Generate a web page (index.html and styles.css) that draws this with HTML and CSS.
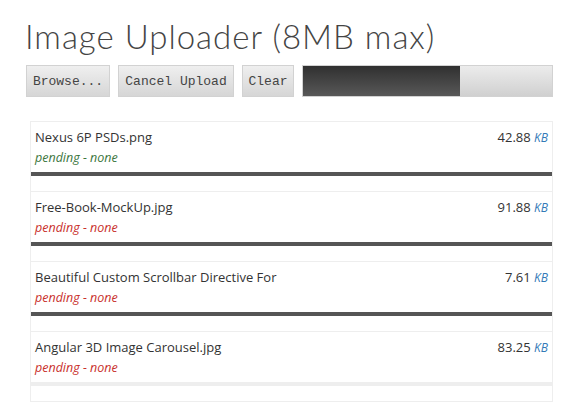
FILE: index.html
```html
<!DOCTYPE html>
<html lang="en">
<head>
    <meta charset="UTF-8">
    <meta name="viewport" content="width=device-width, initial-scale=1.0">
    <title>Image Uploader</title>
    <link rel="stylesheet" href="styles.css">
</head>
<body>
    <div class="container">
        <h1>Image Uploader (8MB max)</h1>

        <div class="toolbar">
            <button class="btn btn-browse">Browse...</button>
            <button class="btn btn-cancel">Cancel Upload</button>
            <button class="btn btn-clear">Clear</button>
            <div class="progress">
                <div class="progress-fill" style="width: 63%;"></div>
            </div>
        </div>

        <ul class="file-list">
            <li class="file">
                <div class="file-row">
                    <span class="file-name">Nexus 6P PSDs.png</span>
                    <span class="file-size">42.88 <em>KB</em></span>
                </div>
                <div class="file-status ok">pending - none</div>
                <div class="file-bar"><div class="file-bar-fill" style="width: 100%;"></div></div>
            </li>
            <li class="file">
                <div class="file-row">
                    <span class="file-name">Free-Book-MockUp.jpg</span>
                    <span class="file-size">91.88 <em>KB</em></span>
                </div>
                <div class="file-status err">pending - none</div>
                <div class="file-bar"><div class="file-bar-fill" style="width: 100%;"></div></div>
            </li>
            <li class="file">
                <div class="file-row">
                    <span class="file-name">Beautiful Custom Scrollbar Directive For</span>
                    <span class="file-size">7.61 <em>KB</em></span>
                </div>
                <div class="file-status err">pending - none</div>
                <div class="file-bar"><div class="file-bar-fill" style="width: 100%;"></div></div>
            </li>
            <li class="file">
                <div class="file-row">
                    <span class="file-name">Angular 3D Image Carousel.jpg</span>
                    <span class="file-size">83.25 <em>KB</em></span>
                </div>
                <div class="file-status err">pending - none</div>
                <div class="file-bar"><div class="file-bar-fill" style="width: 0%;"></div></div>
            </li>
        </ul>
    </div>
</body>
</html>
```

FILE: styles.css
```css
body {
    margin: 0;
    padding: 0;
    background-color: #fff;
    font-family: "Open Sans", Arial, sans-serif;
    color: #333;
}

.container {
    width: 527px;
    padding: 16px 0 0 26px;
}

h1 {
    margin: 0 0 0 -1px;
    font-family: Lato, "Open Sans", sans-serif;
    font-weight: 300;
    font-size: 33px;
    line-height: 40px;
    letter-spacing: 1px;
    color: #444;
}

.toolbar {
    display: flex;
    gap: 8px;
    margin-top: 9px;
    height: 32px;
}

.btn {
    height: 32px;
    padding: 0 5px;
    border: 1px solid #d2d2d2;
    border-radius: 0;
    background: linear-gradient(#efefef, #d6d6d6);
    font-family: "Liberation Mono", "Courier New", monospace;
    font-size: 13px;
    color: #444;
    cursor: pointer;
}

.btn-browse {
    width: 84px;
}

.btn-cancel {
    width: 116px;
}

.btn-clear {
    width: 52px;
}

.progress {
    flex: 1;
    border: 1px solid #d2d2d2;
    background: linear-gradient(#ececec, #d0d0d0);
    box-sizing: border-box;
}

.progress-fill {
    height: 100%;
    background: linear-gradient(#303030, #585858);
}

.file-list {
    list-style: none;
    margin: 24px 0 0 4px;
    padding: 0;
    border: 1px solid #eee;
    border-top: none;
}

.file {
    border-top: 1px solid #eee;
    margin-bottom: 15px;
}

.file-row {
    display: flex;
    justify-content: space-between;
    padding: 5px 4px 0;
    font-size: 13px;
    line-height: 20px;
}

.file-size em {
    font-size: 12px;
    color: #337ab7;
}

.file-status {
    padding: 0 4px;
    font-size: 12.5px;
    line-height: 20px;
    font-style: italic;
    margin-bottom: 4px;
}

.file-status.ok {
    color: #3c763d;
}

.file-status.err {
    color: #c9302c;
}

.file-bar {
    height: 4px;
    background-color: #eee;
}

.file-bar-fill {
    height: 100%;
    background-color: #555;
}
```
